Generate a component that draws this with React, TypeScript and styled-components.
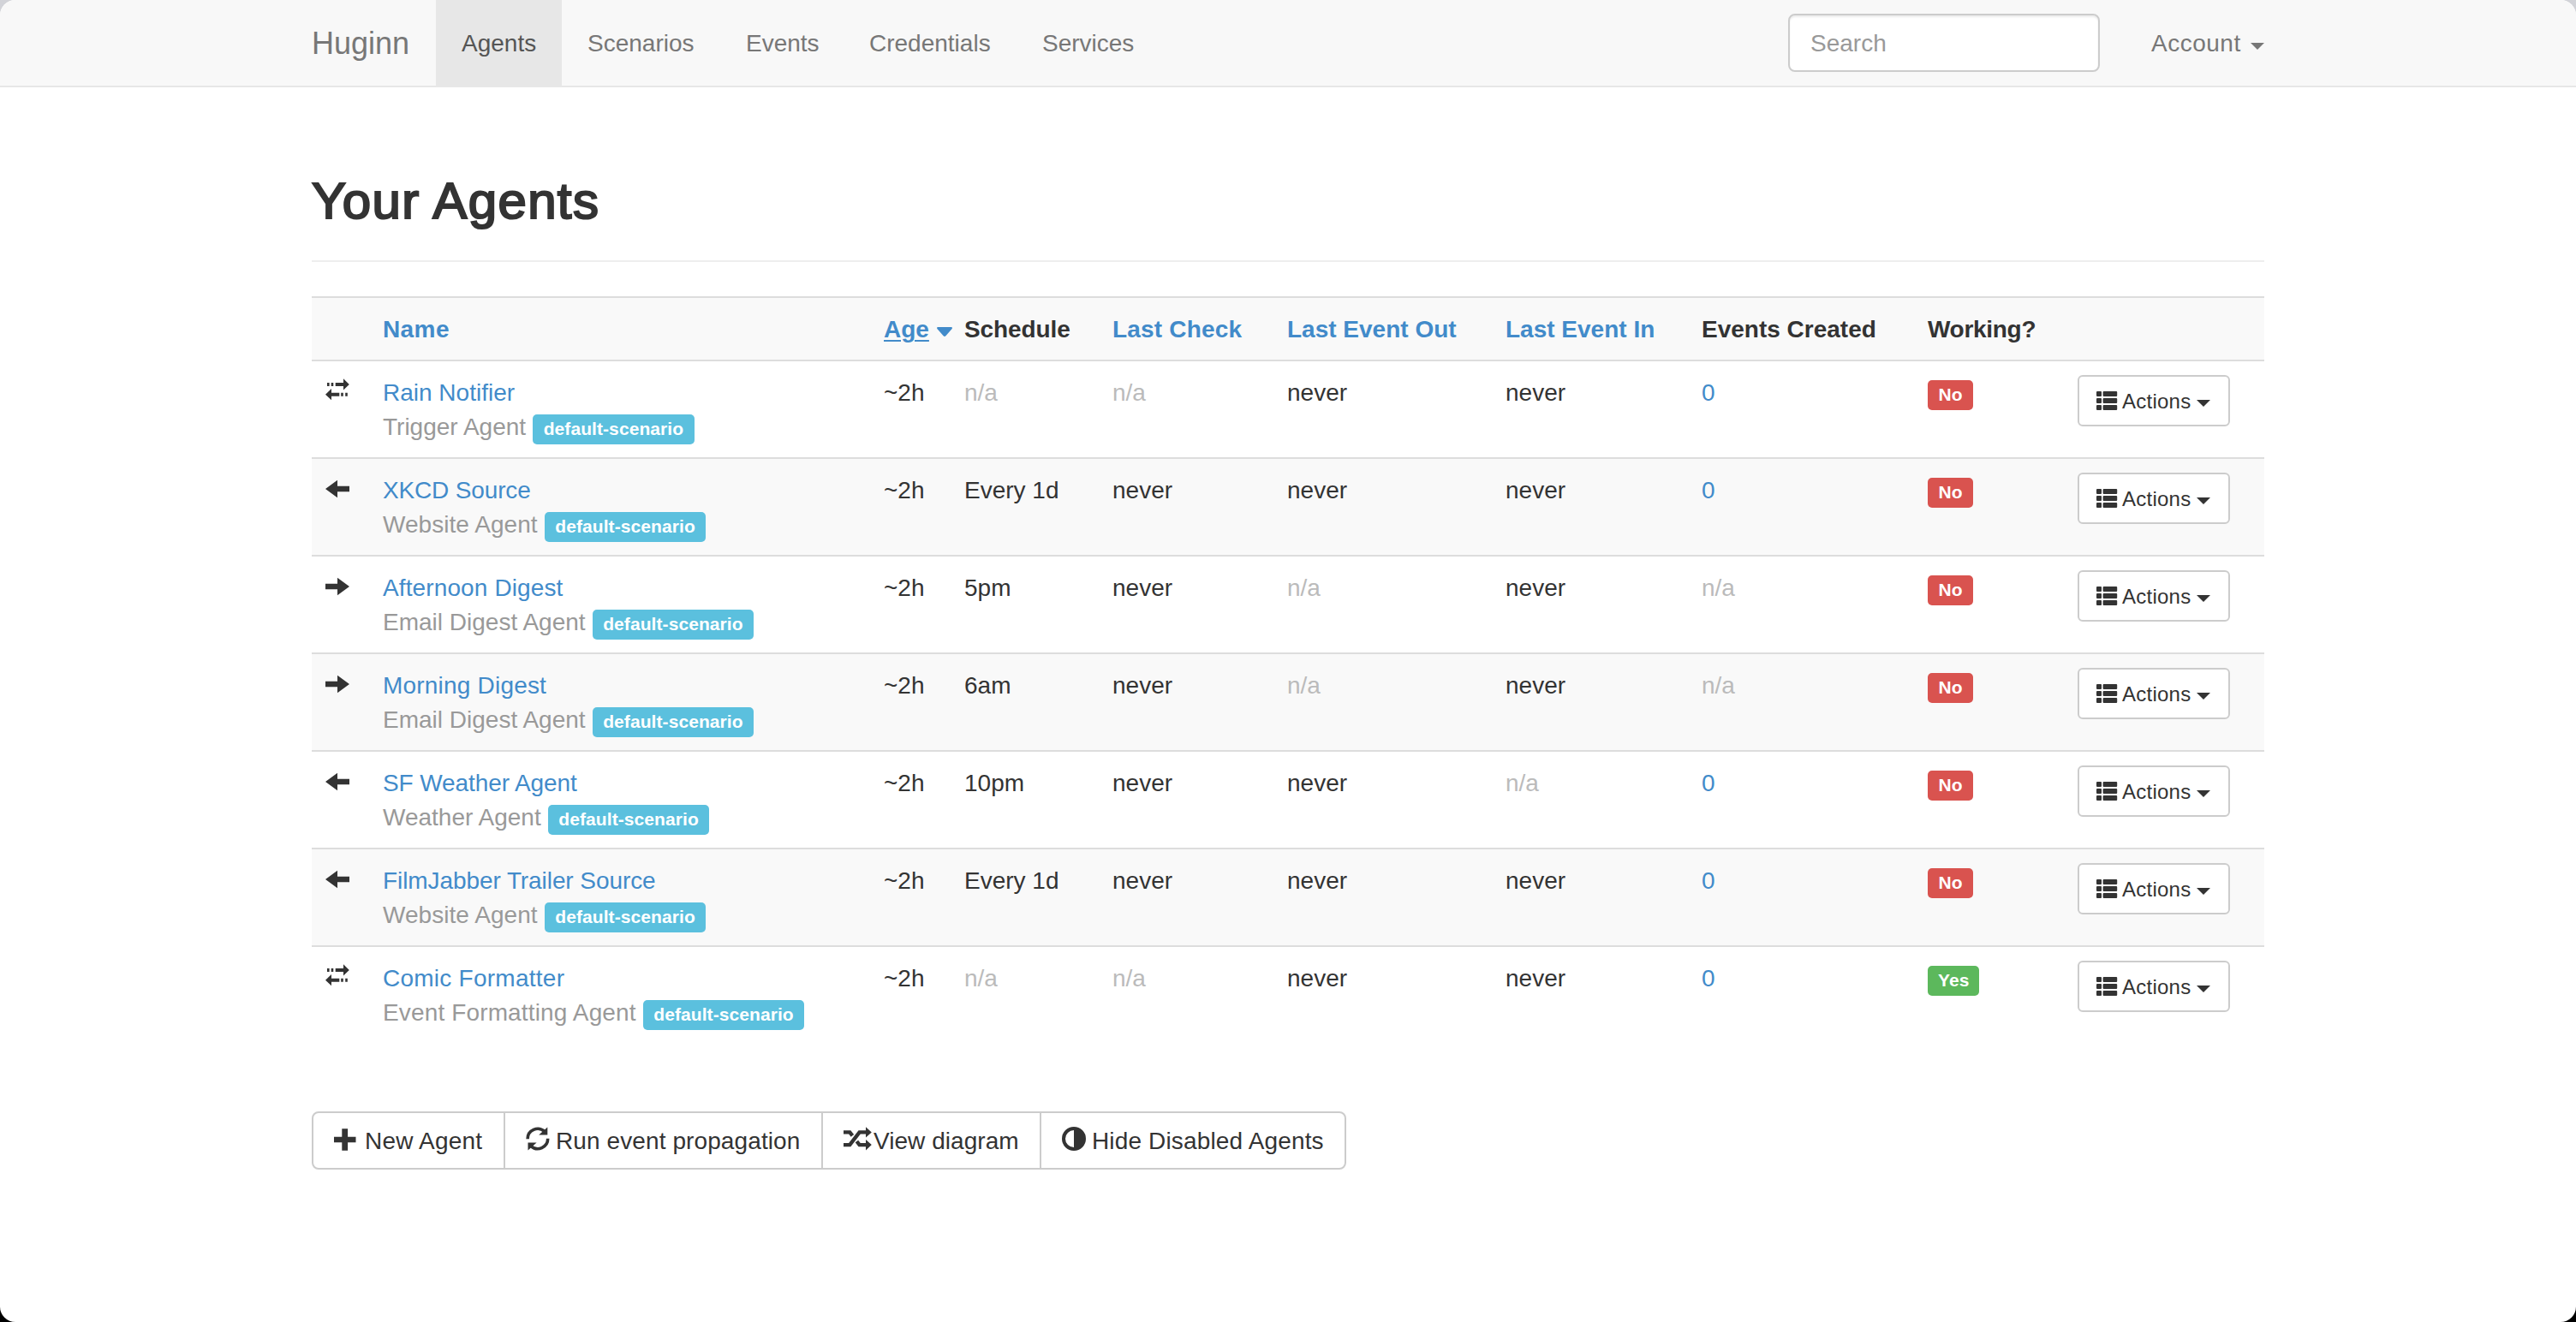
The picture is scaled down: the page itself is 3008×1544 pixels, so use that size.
import React from "react";
import styled, { createGlobalStyle } from "styled-components";

const Global = createGlobalStyle`
  *, *::before, *::after { box-sizing: border-box; }
  html, body { margin: 0; padding: 0; }
  body {
    background: linear-gradient(#d2d3d8 0 50%, #000 50% 100%);
    font-family: "Helvetica Neue", "Liberation Sans", Arial, sans-serif;
    font-size: 28px;
    line-height: 40px;
    color: #333;
  }
`;

const Window = styled.div`
  width: 3008px;
  height: 1544px;
  background: #fff;
  border-radius: 18px;
  overflow: hidden;
`;

const Navbar = styled.header`
  height: 102px;
  background: #f8f8f8;
  border-bottom: 2px solid #e7e7e7;
`;

const Container = styled.div`
  width: 2280px;
  margin: 0 auto;
`;

const NavRow = styled(Container)`
  display: flex;
  align-items: center;
  height: 100px;
`;

const Brand = styled.a`
  width: 145px;
  padding-top: 2px;
  font-size: 36px;
  color: #777;
`;

const NavItem = styled.a<{ $width: number; $active?: boolean }>`
  width: ${(p) => p.$width}px;
  height: 100px;
  padding: 31px 0 29px 30px;
  white-space: nowrap;
  color: ${(p) => (p.$active ? "#555" : "#777")};
  background: ${(p) => (p.$active ? "#e7e7e7" : "transparent")};
`;

const SearchInput = styled.input`
  width: 364px;
  height: 68px;
  margin-left: auto;
  padding: 13px 24px 11px;
  border: 2px solid #ccc;
  border-radius: 8px;
  background: #fff;
  box-shadow: inset 0 2px 2px rgba(0, 0, 0, 0.075);
  font: inherit;
  outline: none;
  &::placeholder { color: #999; opacity: 1; }
`;

const Account = styled.a`
  display: flex;
  align-items: center;
  justify-content: space-between;
  width: 132px;
  margin-left: 60px;
  padding-top: 2px;
  letter-spacing: 0.5px;
  color: #777;
`;

const Caret = styled.span`
  width: 0;
  height: 0;
  margin-top: 5px;
  border-top: 8px solid currentColor;
  border-left: 8px solid transparent;
  border-right: 8px solid transparent;
`;

const Heading = styled.h2`
  height: 204px;
  margin: 0 0 40px;
  padding-top: 100px;
  border-bottom: 2px solid #eee;
  font-size: 60px;
  font-weight: 400;
  line-height: 66px;
  letter-spacing: 1.35px;
  -webkit-text-stroke: 2.2px #333;
`;

const Table = styled.table`
  width: 2280px;
  table-layout: fixed;
  border-collapse: separate;
  border-spacing: 0;
`;

const Row = styled.tr<{ $striped?: boolean }>`
  background: ${(p) => (p.$striped ? "#f9f9f9" : "#fff")};
`;

const HeadCell = styled.th<{ $sortable?: boolean; $spacing?: number }>`
  height: 74px;
  padding: 17px 0 15px 16px;
  border-top: 2px solid #ddd;
  text-align: left;
  white-space: nowrap;
  letter-spacing: ${(p) => p.$spacing ?? 0}px;
  color: ${(p) => (p.$sortable ? "#428bca" : "#333")};
`;

const Sorted = styled.div`
  display: flex;
  align-items: center;
  gap: 9px;
`;

const SortLabel = styled.span`
  text-decoration: underline;
  text-decoration-thickness: 2px;
  text-underline-offset: 3px;
`;

const Cell = styled.td<{ $dim?: boolean }>`
  height: 114px;
  padding: 17px 0 15px 16px;
  border-top: 2px solid #ddd;
  vertical-align: top;
  white-space: nowrap;
  color: ${(p) => (p.$dim ? "#bbb" : "#333")};
`;

const WidgetCell = styled(Cell)`
  padding: 16px 0 16px 16px;
`;

const Link = styled.a<{ $spacing?: number }>`
  letter-spacing: ${(p) => p.$spacing ?? 0}px;
  color: #428bca;
`;

const Kind = styled.div<{ $spacing?: number }>`
  display: flex;
  align-items: flex-start;
  height: 40px;
  gap: 8px;
  letter-spacing: ${(p) => p.$spacing ?? 0}px;
  color: #999;
`;

const Label = styled.span<{ $tone: "info" | "danger" | "success" }>`
  display: block;
  width: fit-content;
  min-width: 53px;
  height: 35px;
  margin-top: ${(p) => (p.$tone === "info" ? 5 : 6)}px;
  padding: 0 ${(p) => (p.$tone === "success" ? 12 : 12.6)}px;
  border-radius: 5px;
  background: ${(p) =>
    ({ info: "#5bc0de", danger: "#d9534f", success: "#5cb85c" })[p.$tone]};
  color: #fff;
  font-size: 21px;
  font-weight: 700;
  line-height: 34px;
  text-align: center;
  letter-spacing: 0.08px;
`;

const ActionsButton = styled.button`
  display: flex;
  align-items: center;
  width: 178px;
  height: 60px;
  padding: 0 20px;
  border: 2px solid #ccc;
  border-radius: 6px;
  background: #fff;
  color: #333;
  font: inherit;
  font-size: 24px;
  line-height: 36px;
`;

const ActionsText = styled.span`
  margin: 1px 7px 0 6px;
  letter-spacing: 0.25px;
`;

const ButtonGroup = styled.div`
  display: flex;
  width: 1208px;
  height: 68px;
  margin-top: 80px;
  border: 2px solid #ccc;
  border-radius: 8px;
  background: #fff;
`;

const GroupButton = styled.button<{ $width: number; $gap: number; $spacing?: number }>`
  display: flex;
  align-items: center;
  gap: ${(p) => p.$gap}px;
  width: ${(p) => p.$width}px;
  padding: 2px 0 0 24px;
  border: 0;
  border-right: 2px solid #ccc;
  background: transparent;
  color: #333;
  font: inherit;
  letter-spacing: ${(p) => p.$spacing ?? 0}px;
  white-space: nowrap;
  &:last-child { border-right: 0; }
`;

const Glyph = styled.svg<{ $top?: number }>`
  display: block;
  flex: none;
  overflow: visible;
  margin-top: ${(p) => p.$top ?? 0}px;
  fill: currentColor;
`;

type Direction = "both" | "in" | "out";

const DirectionIcon = ({ direction }: { direction: Direction }) => (
  <Glyph $top={5} width="28" height="28" viewBox="0 0 28 28">
    {direction === "both" && (
      <path d="M2 4h2.6v4H2zM6.7 4h2.6v4H6.7zM11.7 4h9.3V-.7L27.8 6 21 12.5V8h-9.3zM7 11v4.8h9.3v4H7V24.3L0 17.8zM18.2 15.8h2.6v4h-2.6zM23.2 15.8h2.6v4h-2.6z" />
    )}
    {direction === "out" && <path d="M0 14 14 3.7V10.7H28V17.3H14V24.3z" />}
    {direction === "in" && <path d="M28 14 14 3.7V10.7H0V17.3H14V24.3z" />}
  </Glyph>
);

const ListIcon = () => (
  <Glyph width="24" height="22" viewBox="0 0 24 22">
    {[0, 8, 16].map((y) => (
      <React.Fragment key={y}>
        <rect x="0" y={y} width="6" height="6" rx="1" />
        <rect x="7.6" y={y} width="16.6" height="6" rx="1" />
      </React.Fragment>
    ))}
  </Glyph>
);

const PlusIcon = () => (
  <Glyph $top={-4} width="28" height="28" viewBox="0 0 28 28">
    <path d="M9.3 1.3h6.8v9.4h9.4v6.6h-9.4v9.5H9.3v-9.5H0v-6.6h9.3z" />
  </Glyph>
);

const RefreshIcon = () => (
  <Glyph $top={-6} width="28" height="28" viewBox="0 0 28 28">
    <path
      d="M2.1 14.2A11.8 11.8 0 0 1 21.8 5.4M25.7 13.8A11.8 11.8 0 0 1 6 22.6"
      fill="none"
      stroke="currentColor"
      strokeWidth="3.6"
    />
    <path d="M25.3.6V9.4H15.2zM2.5 27.4V18.6H12.6z" />
  </Glyph>
);

const ShuffleIcon = () => (
  <Glyph $top={-6} width="33" height="28" viewBox="0 0 33 28">
    <path
      d="M0 21.1H7.3L18.6 6.4H27M0 6.4H7.3L10.4 10.4M15.4 17L18.6 21.1H27"
      fill="none"
      stroke="currentColor"
      strokeWidth="4.4"
    />
    <path d="M26 .2 32.8 6.4 26 12.5zM26 15 32.8 21.1 26 27.6z" />
  </Glyph>
);

const ContrastIcon = () => (
  <Glyph $top={-6} width="28" height="28" viewBox="0 0 28 28">
    <path d="M14 0a14 14 0 1 1 0 28a14 14 0 0 1 0-28zM14 4a10 10 0 0 0 0 20z" fillRule="evenodd" />
  </Glyph>
);

const SortIcon = () => (
  <Glyph $top={4} width="18" height="11" viewBox="0 0 18 11">
    <path d="M1.2 0H16.8Q18.8.4 17.4 2.2L10.4 10.2Q9 11.6 7.6 10.2L.6 2.2Q-.8.4 1.2 0z" />
  </Glyph>
);

interface Agent {
  direction: Direction;
  name: string;
  nameSpacing?: number;
  kind: string;
  kindSpacing?: number;
  schedule: string;
  lastCheck: string;
  lastOut: string;
  lastIn: string;
  created: string;
  working: boolean;
}

const agents: Agent[] = [
  { direction: "both", name: "Rain Notifier", kind: "Trigger Agent", schedule: "n/a", lastCheck: "n/a", lastOut: "never", lastIn: "never", created: "0", working: false },
  { direction: "out", name: "XKCD Source", nameSpacing: -0.15, kind: "Website Agent", kindSpacing: 0.05, schedule: "Every 1d", lastCheck: "never", lastOut: "never", lastIn: "never", created: "0", working: false },
  { direction: "in", name: "Afternoon Digest", nameSpacing: 0.12, kind: "Email Digest Agent", schedule: "5pm", lastCheck: "never", lastOut: "n/a", lastIn: "never", created: "n/a", working: false },
  { direction: "in", name: "Morning Digest", nameSpacing: 0.2, kind: "Email Digest Agent", schedule: "6am", lastCheck: "never", lastOut: "n/a", lastIn: "never", created: "n/a", working: false },
  { direction: "out", name: "SF Weather Agent", nameSpacing: -0.1, kind: "Weather Agent", schedule: "10pm", lastCheck: "never", lastOut: "never", lastIn: "n/a", created: "0", working: false },
  { direction: "out", name: "FilmJabber Trailer Source", nameSpacing: -0.08, kind: "Website Agent", kindSpacing: 0.05, schedule: "Every 1d", lastCheck: "never", lastOut: "never", lastIn: "never", created: "0", working: false },
  { direction: "both", name: "Comic Formatter", nameSpacing: 0.25, kind: "Event Formatting Agent", kindSpacing: 0.14, schedule: "n/a", lastCheck: "n/a", lastOut: "never", lastIn: "never", created: "0", working: true },
];

const columnWidths = [67, 585, 94, 173, 204, 255, 229, 264, 175, 234];

const TextCell = ({ value }: { value: string }) => (
  <Cell $dim={value === "n/a"}>{value}</Cell>
);

const AgentRow = ({ agent, striped }: { agent: Agent; striped: boolean }) => (
  <Row $striped={striped}>
    <WidgetCell>
      <DirectionIcon direction={agent.direction} />
    </WidgetCell>
    <Cell>
      <Link $spacing={agent.nameSpacing}>{agent.name}</Link>
      <Kind $spacing={agent.kindSpacing}>
        {agent.kind}
        <Label $tone="info">default-scenario</Label>
      </Kind>
    </Cell>
    <TextCell value="~2h" />
    <TextCell value={agent.schedule} />
    <TextCell value={agent.lastCheck} />
    <TextCell value={agent.lastOut} />
    <TextCell value={agent.lastIn} />
    {agent.created === "n/a" ? (
      <TextCell value="n/a" />
    ) : (
      <Cell>
        <Link>{agent.created}</Link>
      </Cell>
    )}
    <WidgetCell>
      <Label $tone={agent.working ? "success" : "danger"}>{agent.working ? "Yes" : "No"}</Label>
    </WidgetCell>
    <WidgetCell>
      <ActionsButton>
        <ListIcon />
        <ActionsText>Actions</ActionsText>
        <Caret />
      </ActionsButton>
    </WidgetCell>
  </Row>
);

export default function App() {
  return (
    <>
      <Global />
      <Window>
        <Navbar>
          <NavRow as="nav">
            <Brand>Huginn</Brand>
            <NavItem $width={147} $active>Agents</NavItem>
            <NavItem $width={185}>Scenarios</NavItem>
            <NavItem $width={144}>Events</NavItem>
            <NavItem $width={202}>Credentials</NavItem>
            <NavItem $width={166}>Services</NavItem>
            <SearchInput placeholder="Search" />
            <Account>
              Account
              <Caret />
            </Account>
          </NavRow>
        </Navbar>
        <Container as="main">
          <Heading>Your Agents</Heading>
          <Table>
            <colgroup>
              {columnWidths.map((width, i) => (
                <col key={i} width={width} />
              ))}
            </colgroup>
            <thead>
              <Row $striped>
                <HeadCell />
                <HeadCell $sortable $spacing={0.4}>Name</HeadCell>
                <HeadCell $sortable>
                  <Sorted>
                    <SortLabel>Age</SortLabel>
                    <SortIcon />
                  </Sorted>
                </HeadCell>
                <HeadCell $spacing={-0.1}>Schedule</HeadCell>
                <HeadCell $sortable $spacing={0.2}>Last Check</HeadCell>
                <HeadCell $sortable>Last Event Out</HeadCell>
                <HeadCell $sortable>Last Event In</HeadCell>
                <HeadCell>Events Created</HeadCell>
                <HeadCell $spacing={-0.3}>Working?</HeadCell>
                <HeadCell />
              </Row>
            </thead>
            <tbody>
              {agents.map((agent, i) => (
                <AgentRow key={agent.name} agent={agent} striped={i % 2 === 1} />
              ))}
            </tbody>
          </Table>
          <ButtonGroup>
            <GroupButton $width={224} $gap={8} $spacing={0.2}>
              <PlusIcon />
              New Agent
            </GroupButton>
            <GroupButton $width={371} $gap={7} $spacing={0.1}>
              <RefreshIcon />
              Run event propagation
            </GroupButton>
            <GroupButton $width={255} $gap={2} $spacing={0.05}>
              <ShuffleIcon />
              View diagram
            </GroupButton>
            <GroupButton $width={354} $gap={7} $spacing={0.15}>
              <ContrastIcon />
              Hide Disabled Agents
            </GroupButton>
          </ButtonGroup>
        </Container>
      </Window>
    </>
  );
}
